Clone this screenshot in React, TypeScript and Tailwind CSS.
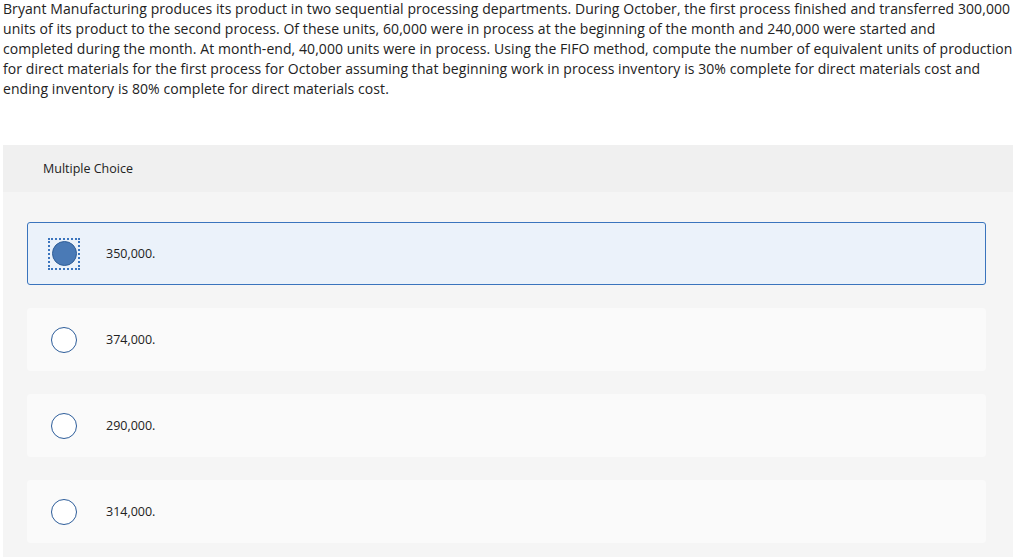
import React from "react";

const options = ["350,000.", "374,000.", "290,000.", "314,000."];

const lines = [
  "Bryant Manufacturing produces its product in two sequential processing departments. During October, the first process finished and transferred 300,000",
  "units of its product to the second process. Of these units, 60,000 were in process at the beginning of the month and 240,000 were started and",
  "completed during the month. At month-end, 40,000 units were in process. Using the FIFO method, compute the number of equivalent units of production",
  "for direct materials for the first process for October assuming that beginning work in process inventory is 30% complete for direct materials cost and",
  "ending inventory is 80% complete for direct materials cost.",
];

export default function App() {
  return (
    <div className="w-[1024px] h-[557px] bg-white overflow-hidden" style={{ fontFamily: '"Open Sans", "Liberation Sans", sans-serif' }}>
      <p className="pl-[3px] whitespace-nowrap text-[14px] tracking-[0.07px] leading-[20px] text-[#222] -mt-[1px]">
        {lines.map((l, i) => (
          <React.Fragment key={i}>
            {l}
            {i < lines.length - 1 && <br />}
          </React.Fragment>
        ))}
      </p>
      <div className="mt-[46px] ml-[3px] w-[1010px] bg-[#f5f5f5] h-[420px]">
        <div className="h-[47px] bg-[#f0f0f0] flex items-center pl-[40px] pt-[2px] text-[12.5px] text-[#222]">
          Multiple Choice
        </div>
        <div className="flex flex-col gap-[23px] pt-[30px] pl-[24px] pr-[27px]">
          {options.map((o, i) => {
            const sel = i === 0;
            return (
              <div
                key={o}
                className={
                  sel
                    ? "h-[63px] flex items-center rounded-[3px] border border-[#3a74bd] bg-[#ebf2fa]"
                    : "h-[63px] flex items-center rounded-[4px] bg-[#fafafa]"
                }
              >
                <div className={sel ? "ml-[20px] w-[32px] h-[32px] flex items-center justify-center border-2 border-dotted border-[#3a74bd]" : "ml-[21px] w-[32px] h-[32px] flex items-center justify-center"}>
                  {sel ? (
                    <div className="w-[25px] h-[25px] rounded-full bg-[#4a7ab6] border border-[#2f5e98]" />
                  ) : (
                    <div className="w-[26px] h-[26px] rounded-full bg-white border-[1.5px] border-[#2d5d9a]" />
                  )}
                </div>
                <span className="ml-[26px] pt-[2px] text-[12.5px] text-[#222]">{o}</span>
              </div>
            );
          })}
        </div>
      </div>
    </div>
  );
}
